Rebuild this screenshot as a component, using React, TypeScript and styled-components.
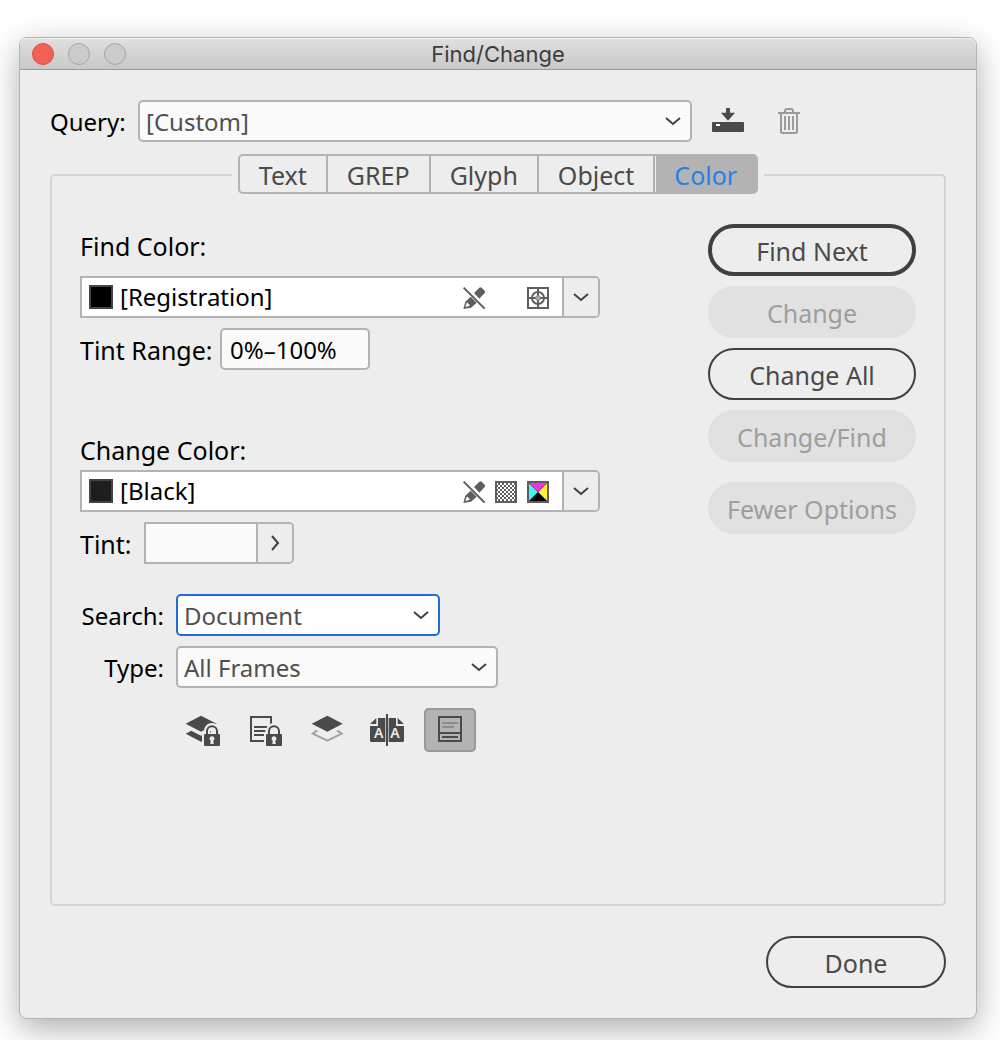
import React, { useState } from "react";
import styled, { createGlobalStyle, css } from "styled-components";

const line = "#b3b3b3";
const ink = "#4a4a4a";
const fieldBg = "#fafafa";

const GlobalStyle = createGlobalStyle`
  *, *::before, *::after { box-sizing: border-box; }
  body { margin: 0; background: #fff; }
  body, button, input, select {
    font-family: "Noto Sans", "Open Sans", sans-serif;
    font-size: 24px;
    line-height: 32px;
  }
  button, input, select { margin: 0; padding: 0; border: 0; background: none; color: inherit; }
  button:focus, input:focus, select:focus { outline: none; }
  svg { display: block; flex: none; }
`;

const Page = styled.main`
  padding: 37px 23px 21px 19px;
  overflow: hidden;
`;

const Window = styled.section`
  border: 1px solid #b4b4b4;
  border-radius: 8px;
  background: #ededed;
  box-shadow: 0 10px 32px rgba(0, 0, 0, 0.32);
  color: #000;
`;

const TitleBar = styled.header`
  display: grid;
  grid-template-columns: 1fr auto 1fr;
  align-items: center;
  height: 32px;
  padding: 0 12px;
  border-bottom: 1px solid #999;
  border-radius: 7px 7px 0 0;
  background: linear-gradient(#e0e0e0, #c8c8c8);
  box-shadow: inset 0 1px #f0f0f0;
`;

const Lights = styled.div`
  display: flex;
  gap: 14px;
`;

const Light = styled.button<{ $red?: boolean }>`
  width: 22px;
  height: 22px;
  border: 1px solid ${(p) => (p.$red ? "#e04b40" : "#a6a6a6")};
  border-radius: 50%;
  background: ${(p) => (p.$red ? "#f26056" : "#cbcbcb")};
`;

const Title = styled.h1`
  margin: 0;
  font: 400 22px/28px Inter, Roboto, sans-serif;
  color: #3c3c3c;
`;

const Content = styled.div`
  display: flex;
  flex-direction: column;
  padding: 30px;
`;

const QueryRow = styled.div`
  display: flex;
  align-items: center;
  margin-bottom: 12px;
`;

const Label = styled.label<{ $width?: number; $right?: boolean; $large?: boolean }>`
  flex: none;
  width: ${(p) => (p.$width ? `${p.$width}px` : "auto")};
  padding-top: ${(p) => (p.$width ? "2px" : "0")};
  padding-right: ${(p) => (p.$right ? "12px" : "0")};
  font-size: ${(p) => (p.$large ? "25px" : "24px")};
  text-align: ${(p) => (p.$right ? "right" : "left")};
  white-space: nowrap;
`;

const SelectBox = styled.div<{ $width: number; $active?: boolean }>`
  display: grid;
  grid-template-columns: 1fr 25px;
  align-items: center;
  flex: 0 1 ${(p) => p.$width}px;
  height: 42px;
  border: 2px solid ${(p) => (p.$active ? "#1f6bd9" : line)};
  border-radius: 5px;
  background: ${(p) => (p.$active ? "#fff" : fieldBg)};

  select {
    grid-area: 1 / 1 / 2 / 3;
    width: 100%;
    height: 38px;
    padding: 2px 0 0 6px;
    appearance: none;
    color: #505050;
  }

  svg {
    grid-area: 1 / 2;
    pointer-events: none;
  }
`;

const QueryTools = styled.div`
  display: flex;
  gap: 34px;
  margin-left: 20px;
`;

const BareButton = styled.button`
  display: block;
`;

const TabLine = styled.div`
  display: flex;
  align-items: flex-end;
`;

const Corner = styled.div<{ $side: "left" | "right" }>`
  flex: 1;
  height: 20px;
  border-top: 2px solid #d5d5d5;
  border-${(p) => p.$side}: 2px solid #d5d5d5;
  border-top-${(p) => p.$side}-radius: 5px;
`;

const Tabs = styled.div`
  display: flex;
  margin: 0 6px;
`;

const Tab = styled.button<{ $on?: boolean }>`
  height: 40px;
  padding: 2px 19px 0;
  border: 2px solid ${line};
  margin-left: -2px;
  font-size: 25px;
  color: ${ink};

  &:first-child { margin-left: 0; border-radius: 5px 0 0 5px; }
  &:last-child { border-radius: 0 5px 5px 0; }
  ${(p) =>
    p.$on &&
    css`
      background: ${line};
      color: #2680eb;
      box-shadow: inset 1px 0 #ededed;
    `}
`;

const Panel = styled.div`
  display: flex;
  justify-content: space-between;
  align-items: flex-start;
  min-height: 712px;
  padding: 30px 28px 28px;
  border: 2px solid #d5d5d5;
  border-top: 0;
  border-radius: 0 0 5px 5px;
`;

const Form = styled.form`
  display: flex;
  flex-direction: column;
  gap: 10px;
  flex: 0 1 520px;
  padding-top: 6px;
`;

const Group = styled.div<{ $gap?: number; $before?: number }>`
  display: flex;
  flex-direction: column;
  gap: ${(p) => p.$gap ?? 10}px;
  margin-top: ${(p) => p.$before ?? 0}px;
`;

const Row = styled.div`
  display: flex;
  align-items: center;
`;

const Combo = styled.div`
  display: flex;
  align-items: center;
  height: 42px;
  border: 2px solid ${line};
  border-radius: 0 5px 5px 0;
  background: #fff;
  overflow: hidden;

  select {
    flex: 1;
    min-width: 0;
    height: 38px;
    padding-left: 7px;
    appearance: none;
  }
`;

const Swatch = styled.span<{ $color: string }>`
  width: 24px;
  height: 24px;
  margin-left: 7px;
  border: 2px solid #444;
  background: ${(p) => p.$color};
`;

const Marks = styled.span`
  display: flex;
  gap: 8px;
  margin-right: 12px;
`;

const EndButton = styled.button`
  display: grid;
  place-items: center;
  flex: none;
  width: 36px;
  height: 38px;
  border-left: 2px solid ${line};
  background: #ededed;
`;

const RangeInput = styled.input`
  width: 150px;
  height: 42px;
  padding: 0 8px;
  border: 2px solid ${line};
  border-radius: 5px;
  background: ${fieldBg};
`;

const TintBox = styled.div`
  display: flex;
  width: 150px;
  height: 42px;
  border: 2px solid ${line};
  border-radius: 0 5px 5px 0;
  overflow: hidden;

  input {
    flex: 1;
    min-width: 0;
    padding: 0 8px;
    background: ${fieldBg};
  }
`;

const Toggles = styled.div`
  display: flex;
  gap: 10px;
  margin: 10px 0 0 96px;
`;

const Toggle = styled.button<{ $on?: boolean }>`
  display: grid;
  place-items: center;
  width: 52px;
  height: 44px;
  border-radius: 5px;
  ${(p) =>
    p.$on &&
    css`
      background: ${line};
      box-shadow: inset 0 0 0 2px #999;
    `}
`;

const Actions = styled.div`
  display: flex;
  flex-direction: column;
  flex: 0 0 208px;
  gap: 10px;
`;

const Pill = styled.button<{ $heavy?: boolean }>`
  height: 52px;
  padding-top: 2px;
  border: ${(p) => (p.$heavy ? 4 : 2)}px solid #404040;
  border-radius: 26px;
  font-size: 25px;
  color: ${ink};
  white-space: nowrap;

  &:disabled {
    border-color: #e1e1e1;
    background: #e1e1e1;
    color: #9e9e9e;
  }
`;

const Spacer = styled.div`
  height: 0;
`;

const Footer = styled.footer`
  display: flex;
  justify-content: flex-end;
  margin-top: 30px;

  button { width: 180px; }
`;

const Chevron = () => (
  <svg width="16" height="10" viewBox="0 0 16 10" fill="none" stroke="#404040" strokeWidth="2">
    <path d="M1 2l7 6 7-6" />
  </svg>
);

const ChevronRight = () => (
  <svg width="10" height="16" viewBox="0 0 10 16" fill="none" stroke="#404040" strokeWidth="2">
    <path d="M2 1l6 7-6 7" />
  </svg>
);

const SaveIcon = () => (
  <svg width="32" height="26" viewBox="0 0 96 78">
    <path fill="#4a4a4a" d="M42 0h12v14h15L48 38 27 14h15zM2 42h92l2 2v26l-2 2H2l-2-2V44z" />
    <path fill="#fff" d="M12 48h12v6H12z" />
  </svg>
);

const TrashIcon = () => (
  <svg width="22" height="26" viewBox="0 0 66 78" fill="none" stroke="#9a9a9a">
    <path strokeWidth="6" d="M0 15h66M21 14V8q1-5 6-5h12q5 0 6 5v6M9 16v54q0 5 5 5h38q5 0 5-5V16" />
    <path strokeWidth="6" d="M21 24v42M33 24v42M45 24v42" />
  </svg>
);

const NoEditIcon = () => (
  <svg width="24" height="24" viewBox="0 0 72 72">
    <path fill="#5e5e5e" d="m4 72 6-22 16-15 18 18-17 15zM36 24 52 8q3-3 7 0l9 9q3 4 0 7L52 41z" />
    <path fill="#fff" d="m10 66 4-12 4-1 1 5 5 1-2 4z" />
    <path stroke="#fff" strokeWidth="10" d="m7 4 64 64" />
    <path stroke="#5e5e5e" strokeWidth="6" d="m5 8 63 63" />
  </svg>
);

const RegistrationIcon = () => (
  <svg width="24" height="24" viewBox="0 0 72 72" fill="none" stroke="#5e5e5e">
    <path strokeWidth="6" d="M6 9h60v60H6z" />
    <circle cx="36" cy="39" r="18" strokeWidth="6" />
    <circle cx="36" cy="39" r="7" strokeWidth="3" />
    <path strokeWidth="6" d="M36 9v22M36 47v22M6 39h22M44 39h22" />
    <path strokeWidth="2" d="M36 31v16M28 39h16" />
  </svg>
);

const TintIcon = () => (
  <svg width="24" height="24" viewBox="0 0 24 24">
    <defs>
      <pattern id="checks" width="4" height="4" patternUnits="userSpaceOnUse">
        <path fill="#5e5e5e" d="M0 0h2v2H0zM2 2h2v2H2z" />
      </pattern>
    </defs>
    <path fill="#fff" stroke="#5e5e5e" strokeWidth="2" d="M2 3h20v20H2z" />
    <path fill="url(#checks)" d="M3 4h18v18H3z" />
  </svg>
);

const CmykIcon = () => (
  <svg width="24" height="24" viewBox="0 0 24 24">
    <path fill="#f032f0" d="M3 4h18l-9 9z" />
    <path fill="#fff032" d="M21 4v18l-9-9z" />
    <path fill="#000" d="M21 22H3l9-9z" />
    <path fill="#46f5fa" d="M3 22V4l9 9z" />
    <path stroke="#5e5e5e" d="m3 4 18 18M21 4 3 22" />
    <path fill="none" stroke="#5e5e5e" strokeWidth="2" d="M2 3h20v20H2z" />
  </svg>
);

const Lock = ({ x }: { x: number }) => (
  <g transform={`translate(${x} 54)`}>
    <path fill="none" stroke="#ededed" strokeWidth="18" d="M9 24V15a15 15 0 0 1 30 0v9" />
    <path fill="#ededed" d="M-6 20h60v42H-6z" />
    <path fill="none" stroke="#4a4a4a" strokeWidth="6" d="M9 26V16a15 15 0 0 1 30 0v10" />
    <rect y="24" width="48" height="36" rx="3" fill="#4a4a4a" />
    <path fill="#ededed" d="M24 31a7 7 0 0 1 4 13l1 10H19l1-10a7 7 0 0 1 4-13z" />
  </g>
);

const LockedLayersIcon = () => (
  <svg width="52" height="44" viewBox="0 0 156 132">
    <path fill="#4a4a4a" d="m29 47 46-24 47 24-47 24zM29 77l17-9 29 15 29-15v30l-29 3z" />
    <Lock x={84} />
  </svg>
);

const LockedStoryIcon = () => (
  <svg width="52" height="44" viewBox="0 0 156 132">
    <path fill="none" stroke="#4a4a4a" strokeWidth="6" d="M39 27h60v72H39z" />
    <path stroke="#4a4a4a" strokeWidth="6" d="M48 57h40M48 69h34M48 81h30" />
    <Lock x={84} />
  </svg>
);

const HiddenLayersIcon = () => (
  <svg width="52" height="44" viewBox="0 0 156 132">
    <path fill="none" stroke="#a3a3a3" strokeWidth="6" d="m52 67-14 10 44 21 43-21-14-10" />
    <path fill="#ededed" d="m26 54 56 28 55-28-8-14H34z" />
    <path fill="#4a4a4a" d="m35 47 47-24 46 24-46 24z" />
  </svg>
);

const Letter = styled.text`
  font: 600 42px "Noto Sans", sans-serif;
  fill: #ededed;
  text-anchor: middle;
`;

const MasterPagesIcon = () => (
  <svg width="52" height="44" viewBox="0 0 156 132">
    <path fill="#4a4a4a" d="M48 30h22v72H27l-3-3V54h24zM43 30v18H24zM80 30h22v24h24v45l-3 3H80zM107 30v18h19z" />
    <path stroke="#4a4a4a" strokeWidth="6" d="M75 18v96" />
    <Letter x="50" y="90">A</Letter>
    <Letter x="99" y="90">A</Letter>
  </svg>
);

const FootnotesIcon = () => (
  <svg width="52" height="44" viewBox="0 0 156 132" fill="none">
    <path stroke="#4a4a4a" strokeWidth="6" d="M45 27h66v72H45zM45 75h66M54 87h48" />
    <path stroke="#8c8c8c" strokeWidth="6" d="M54 45h48M54 57h36" />
  </svg>
);

const tabNames = ["Text", "GREP", "Glyph", "Object", "Color"];

const toggles = [
  { name: "Include Locked Layers", Icon: LockedLayersIcon },
  { name: "Include Locked Stories", Icon: LockedStoryIcon },
  { name: "Include Hidden Layers", Icon: HiddenLayersIcon },
  { name: "Include Master Pages", Icon: MasterPagesIcon },
  { name: "Include Footnotes", Icon: FootnotesIcon },
];

export default function App() {
  const [tab, setTab] = useState("Color");
  const [on, setOn] = useState<string[]>(["Include Footnotes"]);

  const flip = (name: string) =>
    setOn((now) => (now.includes(name) ? now.filter((n) => n !== name) : [...now, name]));

  return (
    <Page>
      <GlobalStyle />
      <Window>
        <TitleBar>
          <Lights>
            <Light $red aria-label="Close" />
            <Light aria-label="Minimize" />
            <Light aria-label="Zoom" />
          </Lights>
          <Title>Find/Change</Title>
        </TitleBar>
        <Content>
          <QueryRow>
            <Label htmlFor="query" $width={88}>Query:</Label>
            <SelectBox $width={554}>
              <select id="query"><option>[Custom]</option></select>
              <Chevron />
            </SelectBox>
            <QueryTools>
              <BareButton aria-label="Save query"><SaveIcon /></BareButton>
              <BareButton aria-label="Delete query"><TrashIcon /></BareButton>
            </QueryTools>
          </QueryRow>

          <TabLine>
            <Corner $side="left" />
            <Tabs role="tablist">
              {tabNames.map((name) => (
                <Tab key={name} role="tab" aria-selected={tab === name} $on={tab === name} onClick={() => setTab(name)}>
                  {name}
                </Tab>
              ))}
            </Tabs>
            <Corner $side="right" />
          </TabLine>

          <Panel role="tabpanel">
            <Form onSubmit={(e) => e.preventDefault()}>
              <Group $gap={14}>
                <Label htmlFor="find-color" $large>Find Color:</Label>
                <Combo>
                  <Swatch $color="#000" />
                  <select id="find-color"><option>[Registration]</option></select>
                  <Marks>
                    <NoEditIcon />
                    <svg width="24" height="24" />
                    <RegistrationIcon />
                  </Marks>
                  <EndButton type="button" aria-label="Show find colors"><Chevron /></EndButton>
                </Combo>
              </Group>
              <Row>
                <Label htmlFor="range" $width={140} $large>Tint Range:</Label>
                <RangeInput id="range" defaultValue="0%–100%" />
              </Row>

              <Group $gap={4} $before={54}>
                <Label htmlFor="change-color" $large>Change Color:</Label>
                <Combo>
                  <Swatch $color="#1e1e1e" />
                  <select id="change-color"><option>[Black]</option></select>
                  <Marks>
                    <NoEditIcon />
                    <TintIcon />
                    <CmykIcon />
                  </Marks>
                  <EndButton type="button" aria-label="Show change colors"><Chevron /></EndButton>
                </Combo>
              </Group>
              <Row>
                <Label htmlFor="tint" $width={64} $large>Tint:</Label>
                <TintBox>
                  <input id="tint" />
                  <EndButton type="button" aria-label="Tint slider"><ChevronRight /></EndButton>
                </TintBox>
              </Row>

              <Group $before={20}>
                <Row>
                  <Label htmlFor="search" $width={96} $right>Search:</Label>
                  <SelectBox $width={264} $active>
                    <select id="search"><option>Document</option></select>
                    <Chevron />
                  </SelectBox>
                </Row>
                <Row>
                  <Label htmlFor="type" $width={96} $right>Type:</Label>
                  <SelectBox $width={322}>
                    <select id="type"><option>All Frames</option></select>
                    <Chevron />
                  </SelectBox>
                </Row>
              </Group>

              <Toggles>
                {toggles.map(({ name, Icon }) => (
                  <Toggle
                    key={name}
                    type="button"
                    aria-label={name}
                    aria-pressed={on.includes(name)}
                    $on={on.includes(name)}
                    onClick={() => flip(name)}
                  >
                    <Icon />
                  </Toggle>
                ))}
              </Toggles>
            </Form>

            <Actions>
              <Pill $heavy>Find Next</Pill>
              <Pill disabled>Change</Pill>
              <Pill>Change All</Pill>
              <Pill disabled>Change/Find</Pill>
              <Spacer />
              <Pill disabled>Fewer Options</Pill>
            </Actions>
          </Panel>

          <Footer>
            <Pill>Done</Pill>
          </Footer>
        </Content>
      </Window>
    </Page>
  );
}
